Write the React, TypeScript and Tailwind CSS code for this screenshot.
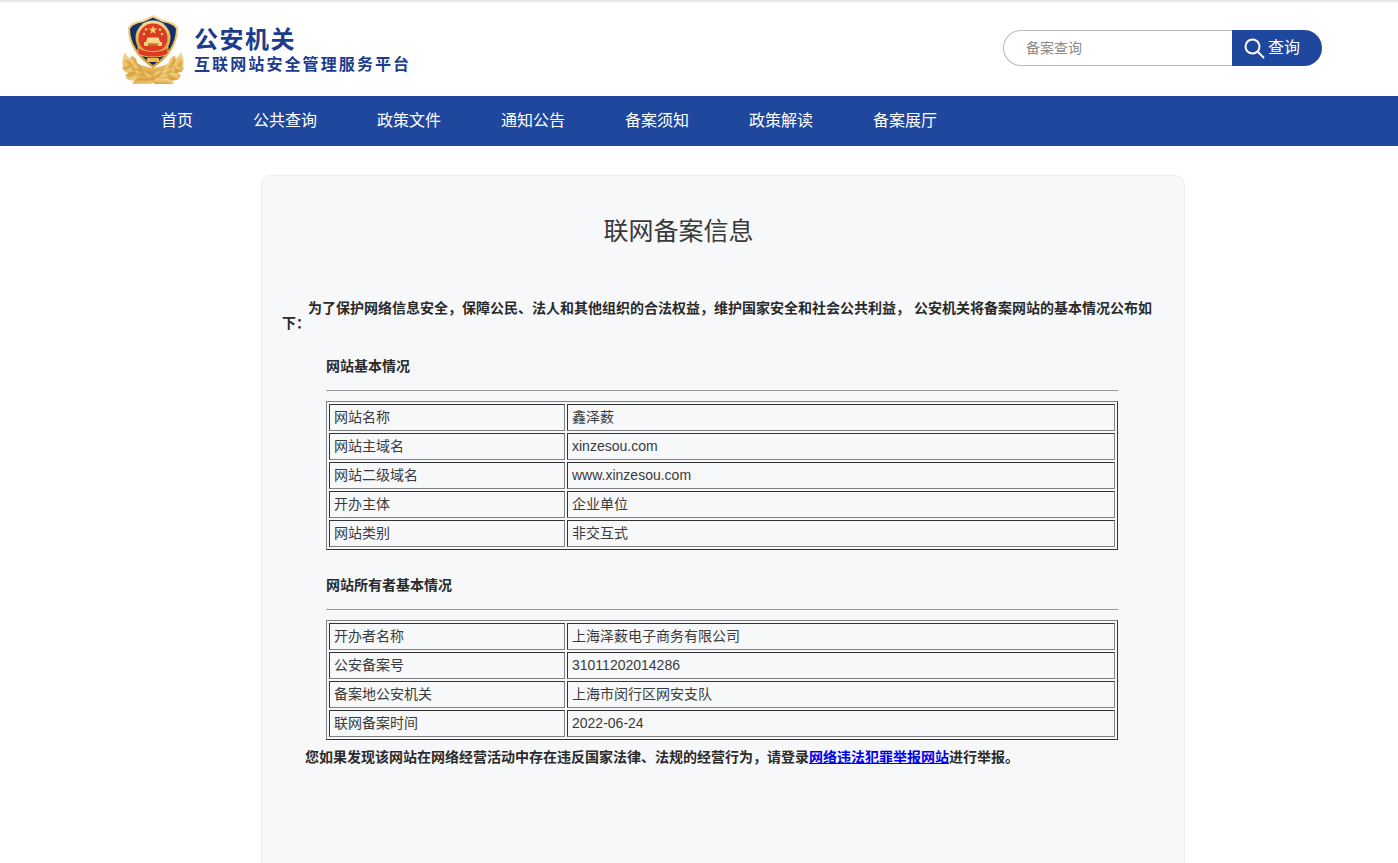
import React from "react";

const NAV = ["首页", "公共查询", "政策文件", "通知公告", "备案须知", "政策解读", "备案展厅"];

function Leaf({ x, y, a, l = 8 }: { x: number; y: number; a: number; l?: number }) {
  return (
    <path
      d={`M0 0 C${l * 0.3} ${-l * 0.35} ${l * 0.75} ${-l * 0.3} ${l} 0 C${l * 0.75} ${l * 0.3} ${l * 0.3} ${l * 0.35} 0 0Z`}
      fill="url(#gold)"
      stroke="#d6a649"
      strokeWidth="0.3"
      transform={`translate(${x} ${y}) rotate(${a})`}
    />
  );
}

function Emblem() {
  const spray: [number, number, number, number][] = [
    [15, 52, 245, 11],
    [11, 56, 235, 12],
    [8, 58, 215, 8],
    [20, 58, 235, 12],
    [16, 60, 215, 13],
    [24, 62, 215, 13],
    [20, 64, 190, 16],
    [30, 66, 195, 16],
    [32, 63, 210, 11],
    [12, 53, 160, 9],
    [18, 60, 160, 13],
    [26, 66, 165, 15],
    [33, 67, 175, 14],
  ];
  return (
    <svg width="64" height="70" viewBox="0 0 64 70" className="shrink-0">
      <defs>
        <linearGradient id="gold" x1="0" y1="0" x2="0" y2="1">
          <stop offset="0" stopColor="#f7dd96" />
          <stop offset="0.55" stopColor="#e6b555" />
          <stop offset="1" stopColor="#cf9a38" />
        </linearGradient>
        <linearGradient id="navy" x1="0" y1="0" x2="0" y2="1">
          <stop offset="0" stopColor="#17336f" />
          <stop offset="1" stopColor="#112655" />
        </linearGradient>
      </defs>
      <path d="M4 38 C0 46 1 54 6 58 C12 64 22 68 32 68 C42 68 52 64 58 58 C63 54 64 46 60 38 C56 46 46 52 32 54 C18 52 8 46 4 38Z" fill="url(#gold)" />
      {spray.map(([x, y, a, l], i) => (
        <g key={i}>
          <Leaf x={x} y={y} a={a} l={l} />
          <Leaf x={64 - x} y={y} a={180 - a} l={l} />
        </g>
      ))}
      <path d="M32 1 L42 6 C49 7 55 9 57 14 C57 30 48 44 32 54 C16 44 7 30 7 14 C9 9 15 7 22 6Z" fill="url(#gold)" />
      <path d="M32 3.5 L41.5 8 C48 9 53 11 55 15 C55 29 46 42 32 51 C18 42 9 29 9 15 C11 11 16 9 22.5 8Z" fill="url(#navy)" />
      <circle cx="32" cy="24" r="17.5" fill="url(#gold)" />
      <circle cx="32" cy="24" r="14.5" fill="#dc3a24" />
      <polygon points="32,11.5 33.1,14.6 36.4,14.6 33.8,16.6 34.7,19.7 32,17.9 29.3,19.7 30.2,16.6 27.6,14.6 30.9,14.6" fill="#f7d565" />
      <circle cx="25" cy="15.5" r="1.3" fill="#f7d565" />
      <circle cx="39" cy="15.5" r="1.3" fill="#f7d565" />
      <circle cx="23" cy="20" r="1.2" fill="#f7d565" />
      <circle cx="41" cy="20" r="1.2" fill="#f7d565" />
      <path d="M25 28 L26.5 23.5 H37.5 L39 28Z" fill="#f6dc90" />
      <rect x="23" y="28" width="18" height="4" fill="#f0cf78" />
      <rect x="27" y="29.5" width="10" height="2.5" fill="#b9752b" />
      <path d="M17 33 C23 39 41 39 47 33 L47 40 C40 44 24 44 17 40Z" fill="#dc3a24" stroke="#eec45c" strokeWidth="0.9" />
      <rect x="26" y="44" width="12" height="4" fill="#e6b954" />
    </svg>
  );
}

function InfoTable({ rows }: { rows: [string, string][] }) {
  return (
    <table className="w-full border-separate border-spacing-[2px] border border-t-[#808080] border-l-[#808080] border-r-[#333] border-b-[#333]">
      <tbody>
        {rows.map(([a, b]) => (
          <tr key={a}>
            <td className="w-[236px] h-[27px] p-0 pl-1 pb-[1px] border border-t-[#333] border-l-[#333] border-r-[#808080] border-b-[#808080]">{a}</td>
            <td className="h-[27px] p-0 pl-1 pb-[1px] border border-t-[#333] border-l-[#333] border-r-[#808080] border-b-[#808080]">{b}</td>
          </tr>
        ))}
      </tbody>
    </table>
  );
}

export default function App() {
  return (
    <div className="h-[863px] overflow-hidden bg-white text-[#3a3a3a] text-sm font-['Liberation_Sans','Noto_Sans_CJK_SC',sans-serif]">
      <header className="h-[96px] border-t-2 border-[#e8e8e8] flex items-center justify-between pl-[121px] pr-[76px]">
        <div className="flex items-center gap-[9px]">
          <Emblem />
          <div className="text-[#1c3c8c] font-bold pt-[2px]">
            <div className="text-[24px] leading-[30px] tracking-[1.5px]">公安机关</div>
            <div className="text-[16px] leading-[20px] tracking-[2.1px]">互联网站安全管理服务平台</div>
          </div>
        </div>
        <div className="flex h-[36px] w-[319px] mb-[2px]">
          <div className="flex-1 border border-r-0 border-[#bbb] rounded-l-[18px] pl-[22px] flex items-center text-[#8a8a8a]">备案查询</div>
          <div className="w-[90px] bg-[#20479e] rounded-r-[18px] flex items-center pl-[12px] gap-[3px] text-white text-base">
            <svg width="21" height="21" viewBox="0 0 21 21" fill="none" stroke="white" strokeWidth="2">
              <circle cx="8.5" cy="8.5" r="7" />
              <path d="M13.5 13.5 L20 20" />
            </svg>
            查询
          </div>
        </div>
      </header>
      <nav className="h-[50px] bg-[#20479e] flex items-center gap-[60px] pl-[161px] text-white text-base">
        {NAV.map((n) => (
          <span key={n}>{n}</span>
        ))}
      </nav>
      <main className="w-[924px] ml-[261px] mt-[29px] h-[700px] bg-[#f7f8fa] border border-[#eeeeee] rounded-[10px] px-[20px]">
        <h1 className="text-[25px] leading-[30px] text-center mt-[39px] pt-[1px] pr-[89px]">联网备案信息</h1>
        <p className="mt-[55px] font-bold leading-[15px] indent-[26px] text-[#2a2a2a]">
          为了保护网络信息安全，保障公民、法人和其他组织的合法权益，维护国家安全和社会公共利益， 公安机关将备案网站的基本情况公布如下：
        </p>
        <section className="ml-[44px] w-[792px]">
          <h2 className="mt-[27px] font-bold text-[#2a2a2a] leading-[16px]">网站基本情况</h2>
          <hr className="mt-[16px] mb-[10px] border-[#999]" />
          <InfoTable
            rows={[
              ["网站名称", "鑫泽薮"],
              ["网站主域名", "xinzesou.com"],
              ["网站二级域名", "www.xinzesou.com"],
              ["开办主体", "企业单位"],
              ["网站类别", "非交互式"],
            ]}
          />
          <h2 className="mt-[27px] font-bold text-[#2a2a2a] leading-[16px]">网站所有者基本情况</h2>
          <hr className="mt-[16px] mb-[10px] border-[#999]" />
          <InfoTable
            rows={[
              ["开办者名称", "上海泽薮电子商务有限公司"],
              ["公安备案号", "31011202014286"],
              ["备案地公安机关", "上海市闵行区网安支队"],
              ["联网备案时间", "2022-06-24"],
            ]}
          />
        </section>
        <p className="mt-[9px] ml-[23px] font-bold text-[#2a2a2a] leading-[16px]">
          您如果发现该网站在网络经营活动中存在违反国家法律、法规的经营行为，请登录
          <a className="text-[#0000ee] underline" href="#">网络违法犯罪举报网站</a>
          进行举报。
        </p>
      </main>
    </div>
  );
}
